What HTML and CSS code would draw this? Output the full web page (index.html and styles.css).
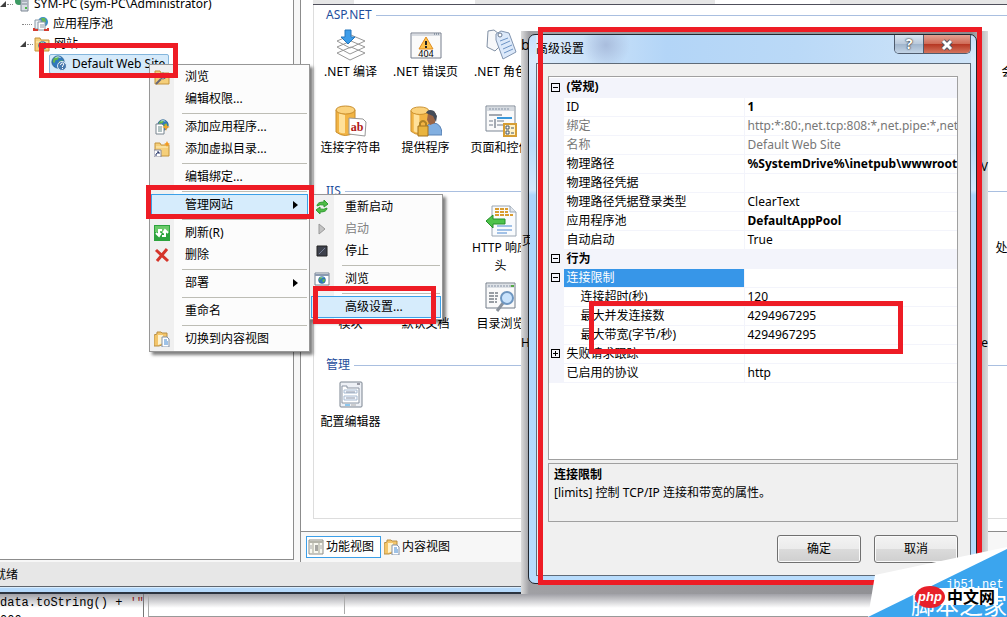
FILE: index.html
```
<!DOCTYPE html>
<html lang="zh-CN">
  <head>
    <meta charset="UTF-8" />
    <title>高级设置</title>
    <link rel="stylesheet" href="styles.css">
  </head>
  <body>
    <svg class="defs" width="0" height="0">
      <symbol id="globe" viewBox="0 0 16 16">
        <circle cx="8" cy="8" r="7" fill="#2f78bd" stroke="#286090" />
        <path d="M3 4q3-3 6-2l-1 3-3 1-1 3-2-1zM9 7l4-1 1 3-3 4-2-2z" fill="#62b84a" />
        <path d="M5 3q3-2 6 0" stroke="#cde9fa" fill="none" />
      </symbol>
      <symbol id="folder" viewBox="0 0 16 16">
        <path d="M1 2h5l1 2h8v11H1z" fill="#f5cf7a" stroke="#c4943c" />
        <path d="M2 6h12" stroke="#fff0bd" />
      </symbol>
      <symbol id="content" viewBox="0 0 16 16">
        <path d="M0 4l3-1V1h4l1 1h5v10l-8 3H0z" fill="#f3c56a" stroke="#b88f45" />
        <path d="M4 4h5v8l-5 2z" fill="#fff3cf" />
        <path d="M8 6h5l2 2v8H8z" fill="#fff" stroke="#8292a8" />
        <path d="M10 9h3M10 11h4M10 13h4" stroke="#3f86cf" />
      </symbol>
      <symbol id="db" viewBox="0 0 32 32">
        <path d="M1 5v22q9 7 19 0V5z" fill="#f2b444" stroke="#c98e2d" />
        <path d="M4 8v19q3 2 6 1V10z" fill="#ffe19a" />
        <ellipse cx="10.500" cy="5" rx="9.500" ry="4" fill="#fbd27c" stroke="#c98e2d" />
      </symbol>
    </svg>

    <main class="window">
      <div class="panes">
        <nav class="tree">
          <ul>
            <li class="level-0">
              <i class="arrow"></i><i class="dots"></i>
              <svg class="icon" viewBox="0 0 16 16">
                <circle cx="5" cy="5" r="4" fill="#3d9a63" />
                <path d="M7 2h7v13H7z" fill="#d7dde4" stroke="#7c8794" />
                <path d="M8 5h5M8 8h5" stroke="#7c8794" /><path d="M11 11h2v2h-2z" fill="#4ab748" />
              </svg>
              <a href="#">SYM-PC (sym-PC\Administrator)</a>
            </li>
            <li class="level-1 leaf">
              <i class="dots"></i>
              <svg class="icon" viewBox="0 0 16 16">
                <circle cx="10" cy="6" r="5" fill="#3e8fc5" /><path d="M8 2l4 0 1 4-3 1z" fill="#65b654" />
                <path d="M2 4h6v9H2z" fill="#eef2f5" stroke="#8796a4" />
                <path d="M5 6h7v8H5z" fill="#fff" stroke="#8796a4" /><path d="M7 9h4M7 11h4" stroke="#8796a4" />
                <path d="M1 12v2h4M15 12v2h-4" stroke="#d33c30" stroke-width="2" fill="none" />
              </svg>
              <a href="#">应用程序池</a>
            </li>
            <li class="level-1">
              <i class="arrow"></i><i class="dots"></i>
              <svg class="icon" viewBox="0 0 16 16"><use href="#folder" /><use href="#globe" x="4" y="5" width="9" height="9" /></svg>
              <a href="#">网站</a>
            </li>
            <li class="level-2">
              <a href="#" class="selected">
                <svg class="icon" viewBox="0 0 16 16">
                  <use href="#globe" width="14" height="14" />
                  <circle cx="11" cy="11" r="4.500" fill="#4778ad" stroke="#dceaf7" />
                  <path d="M9.500 10q0-2 2-2t1 2l-1 1v1M11.500 13v1" stroke="#fff" fill="none" />
                </svg>
                <span>Default Web Site</span>
              </a>
            </li>
          </ul>
        </nav>

        <section class="content">
          <div class="features">
            <section class="group">
              <h2>ASP.NET</h2>
              <div class="items">
                <div class="item">
                  <svg viewBox="0 0 32 32">
                    <path d="M2 24l14-6 14 6-15 7zM2 18l14-6 14 6-15 7zM2 12l14-6 14 6-15 7z" fill="#fff" stroke="#989898" />
                    <path d="M10 1h6v7h4l-7 7-7-7h4z" fill="#3e9de9" stroke="#2477bd" />
                  </svg>
                  <span>.NET 编译</span>
                </div>
                <div class="item">
                  <svg viewBox="0 0 32 32">
                    <path d="M1 4h30v25H1z" fill="#fafafa" stroke="#777f8d" /><path d="M2 6h28" stroke="#b5bdc9" />
                    <path d="M24 5h5" stroke="#4f6278" stroke-dasharray="1 1" />
                    <path d="M16 8l7 12H9z" fill="#ffc34c" stroke="#df8c20" /><path d="M16 12v4M16 17v2" stroke="#222" stroke-width="2" />
                    <text x="16" y="28" class="code">404</text>
                  </svg>
                  <span>.NET 错误页</span>
                </div>
                <div class="item">
                  <svg viewBox="0 0 32 32">
                    <path d="M3 2l6-1 5 4v13l-4 4-8-4z" fill="#f7f8fa" stroke="#8291a5" />
                    <path d="M11 5l5-3 8 2 7 19-13 7-7-19z" fill="#dce9fa" stroke="#8194af" />
                    <path d="M15 12l8-3M16 16l9-4M18 20l9-4M19 24l9-4" stroke="#6c93c4" />
                    <circle cx="15" cy="6" r="2" fill="#fff" stroke="#687991" />
                  </svg>
                  <span>.NET 角色</span>
                </div>
                <div class="item last-column"><span class="no-icon">会话状态</span></div>
                <div class="item">
                  <svg viewBox="0 0 32 32">
                    <use href="#db" width="32" height="32" />
                    <path d="M14 13l14 1 3 3-1 14-16-2z" fill="#fff" stroke="#999" />
                    <text x="22" y="26" class="ab">ab</text>
                  </svg>
                  <span>连接字符串</span>
                </div>
                <div class="item">
                  <svg viewBox="0 0 32 32">
                    <use href="#db" width="30" height="32" />
                    <path d="M15 30q-1-11 8-12 9 0 9 12z" fill="#82afe0" stroke="#5a83b5" />
                    <path d="M18 8q5-5 8 1l-1 9-5 2-3-5z" fill="#9b6544" /><path d="M16 8q2-5 8-2l3 5-1 6-3-6z" fill="#444c59" />
                    <path d="M8 21h10v10H8z" fill="#e9b43e" stroke="#a3731e" /><path d="M10 21v-3q3-4 6 0v3" fill="none" stroke="#ad8126" stroke-width="2" />
                  </svg>
                  <span>提供程序</span>
                </div>
                <div class="item">
                  <svg viewBox="0 0 32 32">
                    <path d="M1 1h29v25H1z" fill="#fafafa" stroke="#7c8795" /><path d="M2 4h27" stroke="#d5dae0" stroke-width="4" />
                    <path d="M4 4h20" stroke="#8793a5" stroke-dasharray="2 1" /><path d="M4 10h13M10 14v9" stroke="#4c5767" />
                    <path d="M12 13h15" stroke="#3998db" stroke-width="2" /><path d="M4 16h4M4 20h4M12 16h7M12 20h6" stroke="#707b89" />
                    <path d="M19 19h12v12H19z" fill="#fff2c6" stroke="#d69d33" stroke-width="2" />
                    <path d="M21 21h3v3h-3zM21 26h3v3h-3z" fill="#fff" stroke="#456" /><path d="M26 23h3M26 28h3" stroke="#456" />
                  </svg>
                  <span>页面和控件</span>
                </div>
              </div>
            </section>

            <section class="group">
              <h2>IIS</h2>
              <div class="items">
                <div class="item third-column">
                  <svg viewBox="0 0 32 32">
                    <path d="M7 1h18l6 6v24H7z" fill="#f9fbfd" stroke="#9aa6b3" /><path d="M25 1v6h6" fill="#e0e5ec" stroke="#9aa6b3" />
                    <path d="M10 4h13M10 7h13M10 10h18" stroke="#d99c30" stroke-width="2" stroke-dasharray="4 1" />
                    <path d="M12 21h15M12 25h15M12 28h10" stroke="#4a88d1" />
                    <path d="M1 16l7-6v4h12v5H8v4z" fill="#4ec34a" stroke="#258e2a" />
                  </svg>
                  <span>HTTP 响应<br>头</span>
                </div>
                <div class="item last-column"><span class="no-icon">处理程序映射</span></div>
                <div class="item"><span class="no-icon">模块</span></div>
                <div class="item"><span class="no-icon">默认文档</span></div>
                <div class="item">
                  <svg viewBox="0 0 32 32">
                    <path d="M1 2h29v25H1z" fill="#fafafa" stroke="#737d89" /><path d="M2 5h27" stroke="#dde1e6" stroke-width="4" />
                    <path d="M3 5h23" stroke="#8793a5" stroke-dasharray="2 1" /><path d="M26 5h3" stroke="#55a947" stroke-width="2" />
                    <path d="M4 12h9M4 15h9M4 18h8M4 21h8" stroke="#39424e" stroke-dasharray="5 1" />
                    <path d="M18 22l-6 8" stroke="#8a929c" stroke-width="3" />
                    <circle cx="22" cy="17" r="6" fill="#c9e3fc" stroke="#6e96c0" stroke-width="2" />
                  </svg>
                  <span>目录浏览</span>
                </div>
              </div>
            </section>

            <section class="group">
              <h2>管理</h2>
              <div class="items">
                <div class="item">
                  <svg viewBox="0 0 32 32">
                    <rect x="5" y="3" width="22" height="25" rx="1" fill="#edf0f5" stroke="#7a8490" />
                    <path d="M7 7h5v2h12v15H7z" fill="#fff" stroke="#8b95a3" /><path d="M22 5h3" stroke="#445" />
                    <path d="M9 11h13v3H9zM9 17h13v4H9z" fill="#f8faff" stroke="#a6bad1" />
                    <path d="M11 13h9M11 19h9" stroke="#8a94a5" /><path d="M10 26h5" stroke="#2a9ce4" /><path d="M16 26h5" stroke="#aaa" />
                  </svg>
                  <span>配置编辑器</span>
                </div>
              </div>
            </section>
          </div>
          <div class="view-tabs">
            <button type="button" class="active">
              <svg class="icon" viewBox="0 0 16 16">
                <path d="M1 1h14v14H1z" fill="#f8f8f0" stroke="#8d8d87" /><path d="M1 3h14" stroke="#b5b5aa" stroke-width="2" />
                <path d="M5 4v10M11 4v10" stroke="#a5a596" /><path d="M2 7h2M2 9h2M12 7h2M12 9h2" stroke="#aaa" />
                <path d="M7 7h3M7 9h3M7 11h3" stroke="#555" />
              </svg>
              功能视图
            </button>
            <button type="button"><svg class="icon"><use href="#content" /></svg>内容视图</button>
          </div>
        </section>
      </div>
      <footer class="status"><span>就绪</span></footer>
      <div class="frame"></div>
    </main>

    <div class="editor">
      <pre class="code-lines">data.toString() + <b>'"</b><b>结</b>
000</pre>
      <div class="editor-panel"><div class="editor-cell"></div></div>
    </div>

    <div class="menu site-menu">
      <button type="button">
        <svg class="icon"><use href="#folder" /><circle cx="9" cy="7" r="3" fill="#d9effb" stroke="#667" /><path d="M7 10l-5 5" stroke="#667" stroke-width="2" /></svg>
        浏览
      </button>
      <button type="button">编辑权限...</button>
      <hr>
      <button type="button">
        <svg class="icon"><use href="#globe" x="3" width="12" height="12" /><path d="M2 5h6l2 2v8H2z" fill="#fff" stroke="#78858f" /><path d="M4 8h4M4 10h4M4 12h4" stroke="#688" /><path d="M12 4l1 3 3 1-3 1-1 3-1-3-3-1 3-1z" fill="#f7a52a" /></svg>
        添加应用程序...
      </button>
      <button type="button">
        <svg class="icon"><use href="#folder" /><path d="M13 0l1 2 2 1-2 1-1 2-1-2-2-1 2-1z" fill="#f39a1f" /><path d="M0 9h7v7H0z" fill="#fff" stroke="#889" /><path d="M2 15v-2l3-2M3 11h2v2" stroke="#236" fill="none" /></svg>
        添加虚拟目录...
      </button>
      <hr>
      <button type="button">编辑绑定...</button>
      <hr>
      <button type="button" class="hot">管理网站<i class="more"></i></button>
      <hr>
      <button type="button">
        <svg class="icon"><path d="M0 0h16v16H0z" fill="#2da33d" /><path d="M1 1h14v6H1z" fill="#69c967" /><path d="M8 5H5v5M2 8l3 3 2-3M8 11h3V6M9 8l2-3 3 3" stroke="#fff" stroke-width="2" fill="none" /></svg>
        刷新(R)
      </button>
      <button type="button">
        <svg class="icon"><path d="M2 3l12 11M13 2L3 14" stroke="#d5352b" stroke-width="3" /></svg>
        删除
      </button>
      <hr>
      <button type="button">部署<i class="more"></i></button>
      <hr>
      <button type="button">重命名</button>
      <hr>
      <button type="button"><svg class="icon"><use href="#content" /></svg>切换到内容视图</button>
    </div>

    <div class="menu manage-menu">
      <button type="button">
        <svg class="icon"><path d="M3 7q0-4 7-4V1l4 4-4 3V6Q6 5 3 7zM13 9q0 4-7 4v2l-4-4 4-3v2q4 1 7-1z" fill="#4fbd46" stroke="#2f9b32" /></svg>
        重新启动
      </button>
      <button type="button" disabled>
        <svg class="icon"><path d="M5 3l6 5-6 5z" fill="#c3c3c3" stroke="#999" /></svg>
        启动
      </button>
      <button type="button">
        <svg class="icon"><path d="M3 3h10v10H3z" fill="#3e414c" stroke="#222" /><path d="M5 11l6-6" stroke="#777f96" /></svg>
        停止
      </button>
      <hr>
      <button type="button">
        <svg class="icon"><path d="M1 2h14v12H1z" fill="#fff" stroke="#778494" /><path d="M1 4h14" stroke="#8c9ab0" stroke-width="2" /><use href="#globe" x="4" y="5" width="8" height="8" /></svg>
        浏览
      </button>
      <hr>
      <button type="button" class="hot">高级设置...</button>
    </div>

    <div class="dialog-shade">
      <span class="peek peek-b">b</span>
      <span class="peek peek-page">页</span>
      <span class="peek peek-h">H</span>
      <span class="peek peek-v">V</span>
      <span class="peek peek-e">e</span>
      <div class="dialog" role="dialog" aria-labelledby="dialog-title">
        <header>
          <h1 id="dialog-title">高级设置</h1>
          <div class="caption-buttons">
            <button type="button" class="help" aria-label="帮助">?</button>
            <button type="button" class="close" aria-label="关闭">
              <svg viewBox="0 0 12 12"><path d="M2 2l8 8M10 2l-8 8" stroke="#555a68" stroke-width="5" /><path d="M2 2l8 8M10 2l-8 8" stroke="#fff" stroke-width="3" /></svg>
            </button>
          </div>
        </header>
        <div class="client">
          <div class="property-grid">
            <table>
              <colgroup><col class="col-toggle"><col class="col-name"><col></colgroup>
              <tbody>
                <tr class="category"><td><button type="button" class="toggle" aria-label="折叠"></button></td><th colspan="2">(常规)</th></tr>
                <tr><td></td><td>ID</td><td class="bold">1</td></tr>
                <tr class="readonly"><td></td><td>绑定</td><td>http:*:80:,net.tcp:808:*,net.pipe:*,net.msmq</td></tr>
                <tr class="readonly"><td></td><td>名称</td><td>Default Web Site</td></tr>
                <tr><td></td><td>物理路径</td><td class="bold">%SystemDrive%\inetpub\wwwroot</td></tr>
                <tr><td></td><td>物理路径凭据</td><td></td></tr>
                <tr><td></td><td>物理路径凭据登录类型</td><td>ClearText</td></tr>
                <tr><td></td><td>应用程序池</td><td class="bold">DefaultAppPool</td></tr>
                <tr><td></td><td>自动启动</td><td>True</td></tr>
                <tr class="category"><td><button type="button" class="toggle" aria-label="折叠"></button></td><th colspan="2">行为</th></tr>
                <tr class="current"><td><button type="button" class="toggle" aria-label="折叠"></button></td><td>连接限制</td><td></td></tr>
                <tr class="child"><td></td><td>连接超时(秒)</td><td>120</td></tr>
                <tr class="child"><td></td><td>最大并发连接数</td><td>4294967295</td></tr>
                <tr class="child"><td></td><td>最大带宽(字节/秒)</td><td>4294967295</td></tr>
                <tr><td><button type="button" class="toggle plus" aria-label="展开"></button></td><td>失败请求跟踪</td><td></td></tr>
                <tr><td></td><td>已启用的协议</td><td>http</td></tr>
              </tbody>
            </table>
          </div>
          <div class="description">
            <strong>连接限制</strong>
            <p>[limits] 控制 TCP/IP 连接和带宽的属性。</p>
          </div>
          <div class="actions">
            <button type="button">确定</button>
            <button type="button">取消</button>
          </div>
        </div>
      </div>
    </div>

    <div class="mark mark-site"></div>
    <div class="mark mark-manage"></div>
    <div class="mark mark-advanced"></div>
    <div class="mark mark-dialog"></div>
    <div class="mark mark-limits"></div>

    <svg class="watermark" viewBox="0 0 139 70">
      <path d="M0 70L7 28 139 0v70z" fill="#fff" />
      <path d="M0 70L139 2v68z" fill="#3ba5ee" />
      <text x="78" y="41" class="wm-url">jb51.net</text>
      <text x="43" y="67" class="wm-name">脚本之家</text>
      <path d="M50 41h80v17H50z" fill="#fff" />
      <ellipse cx="62" cy="50" rx="15" ry="11" fill="#e8202a" />
      <text x="62" y="54" class="wm-php">php</text>
      <text x="79" y="56" class="wm-cn">中文网</text>
    </svg>
  </body>
</html>
```
FILE: styles.css
```
:root {
  --line: #8c8c8c;
  --surface: #f0f0f0;
  --heading: #1e4e9c;
  --aero: #b5d9fb;
  --mark: #ee1c25;
}

* {
  box-sizing: border-box;
}

body {
  display: flex;
  flex-direction: column;
  position: relative;
  height: 100vh;
  margin: 0;
  overflow: hidden;
  background: #fff;
  color: #000;
  font-family: "Noto Sans", "Noto Sans CJK SC", sans-serif;
  font-size: 12px;
  line-height: 18px;
}

button {
  padding: 0;
  border: 0;
  background: none;
  color: inherit;
  font: inherit;
}

a {
  color: inherit;
  text-decoration: none;
}

.defs {
  position: absolute;
}

.icon {
  flex: none;
  width: 16px;
  height: 16px;
}

/* main window */
.window {
  display: flex;
  flex: 1;
  flex-direction: column;
  min-height: 0;
  background: #f7f7f7;
}

.panes {
  display: flex;
  flex: 1;
  gap: 6px;
  min-height: 0;
}

.tree {
  flex: 0 0 294px;
  margin-bottom: 2px;
  overflow: hidden;
  border-right: 1px solid var(--line);
  border-bottom: 1px solid var(--line);
  background: #fff;
}

.tree ul {
  margin: -6px 0 0;
  padding: 0;
  list-style: none;
}

.tree li {
  display: flex;
  align-items: center;
  height: 20px;
  white-space: nowrap;
}

.tree a {
  margin-left: 4px;
}

.level-1 {
  padding-left: 20px;
}

.level-2 {
  padding-left: 45px;
}

.arrow {
  width: 0;
  border-bottom: 6px solid #404040;
  border-left: 6px solid transparent;
}

.dots {
  width: 6px;
  margin: 0 1px;
  border-top: 1px dotted #888;
}

.leaf .dots {
  width: 10px;
  margin-left: 2px;
}

.tree .selected {
  display: flex;
  gap: 5px;
  height: 20px;
  padding: 0 3px 0 1px;
  border: 1px solid #84b6dc;
  border-radius: 2px;
  background: #d5eafa;
}

.content {
  display: flex;
  flex: 1;
  flex-direction: column;
  min-width: 0;
  border-left: 1px solid var(--line);
}

.features {
  display: flex;
  flex: 1;
  flex-direction: column;
  overflow: hidden;
  padding: 0 0 12px 12px;
  border-bottom: 1px solid var(--line);
  background: #fff;
}

.features::before {
  height: 4px;
  border-bottom: 1px solid #50505c;
  background: linear-gradient(to right, #e6e6e6 41px, #fff 41px, #fff 162px, #e6e6e6 162px, #e6e6e6 402px, #fff 402px, #fff 517px, #e6e6e6 517px);
  content: "";
}

.group {
  padding: 2px 0 6px;
  border-left: 1px solid #ddd;
}

.group:last-child {
  flex: 1;
  padding: 0;
  border-bottom: 1px solid #ddd;
}

.group h2 {
  display: flex;
  align-items: center;
  gap: 4px;
  height: 16px;
  margin: 0;
  padding-left: 12px;
  color: var(--heading);
  font-size: 12px;
  font-weight: normal;
}

.group h2::after {
  flex: 1;
  border-top: 1px solid #a9bfe0;
  content: "";
}

.items {
  display: grid;
  grid-template-columns: repeat(10, 75px);
  grid-auto-rows: minmax(76px, auto);
  margin-left: -1px;
}

.item {
  display: flex;
  flex-direction: column;
  align-items: center;
  gap: 2px;
  padding-top: 6px;
  text-align: center;
}

.item svg {
  width: 32px;
  height: 32px;
}

.item span {
  width: 70px;
  white-space: nowrap;
}

.last-column span {
  white-space: normal;
}

.no-icon {
  padding-top: 34px;
}

.third-column {
  grid-column: 3;
}

.last-column {
  grid-column: 10;
}

.code {
  font-size: 9px;
  text-anchor: middle;
}

.ab {
  fill: #b01818;
  font: bold 12px "Liberation Serif", serif;
  text-anchor: middle;
}

.view-tabs {
  display: flex;
  gap: 1px;
  height: 30px;
  padding: 4px 5px;
}

.view-tabs button {
  display: flex;
  align-items: center;
  gap: 2px;
  padding: 0 6px 0 1px;
  border: 1px solid transparent;
}

.view-tabs .active {
  border-color: #3c9fe8;
  background: #fff;
}

.status {
  height: 25px;
  padding: 4px 0 2px;
  border-bottom: 1px solid #60666e;
  background: #e7e7e7;
}

.status span {
  margin-left: -6px;
}

.frame {
  height: 7px;
  border-top: 1px solid #d8ecfd;
  border-bottom: 2px solid #2c3440;
  background: var(--aero);
}

/* code editor behind the window */
.editor {
  display: flex;
  gap: 4px;
  height: 23px;
  overflow: hidden;
  background: linear-gradient(#a0a0a6, #fff 14px);
}

.code-lines {
  flex: 0 0 144px;
  margin: 0;
  overflow: hidden;
  border-right: 1px solid #777;
  font-family: "Liberation Mono", "Noto Sans CJK SC", monospace;
  font-size: 12px;
  line-height: 18px;
}

.code-lines b {
  color: #8c1c1c;
  font-weight: normal;
}

.editor-panel {
  flex: 1;
  border-bottom: 1px solid #999;
  border-left: 1px solid #aaa;
}

.editor-cell {
  width: 196px;
  height: 20px;
  border-right: 1px solid #aaa;
}

/* context menus */
.menu {
  position: absolute;
  padding: 1px;
  border: 1px solid #979797;
  background: linear-gradient(to right, #f0f0f0 24px, #fcfcfc 24px);
  box-shadow: 3px 3px 3px rgba(0, 0, 0, 0.5);
}

.menu button {
  display: flex;
  align-items: center;
  gap: 15px;
  position: relative;
  width: 100%;
  height: 22px;
  padding-left: 34px;
  white-space: nowrap;
}

.menu button:has(.icon) {
  padding-left: 3px;
}

.menu button:disabled {
  color: #808080;
}

.menu hr {
  height: 1px;
  margin: 3px 1px 2px 31px;
  border: 0;
  background: #bdbdb5;
}

.menu .hot {
  background: #d6ecfc;
  box-shadow: inset 0 0 0 1px #3ca0e8;
}

.more {
  margin-left: auto;
  margin-right: 10px;
  border: 4px solid transparent;
  border-right: 0;
  border-left: 5px solid #000;
}

.site-menu {
  top: 64px;
  left: 149px;
  width: 161px;
}

.manage-menu {
  top: 194px;
  left: 309px;
  width: 134px;
}

/* dialog */
.dialog-shade {
  display: flex;
  position: absolute;
  top: 31px;
  left: 521px;
  width: 467px;
  height: 563px;
  padding: 3px 11px 10px 7px;
  background: linear-gradient(to right, #dcdcdc, #a0a0a4 8px, #8c8c90 450px, #dcdcdc);
}

.peek {
  position: absolute;
}

.peek-b {
  top: 5px;
  left: 0;
  font-size: 14px;
}

.peek-page {
  top: 201px;
  left: 1px;
  z-index: 1;
  width: 8px;
  overflow: hidden;
}

.peek-h {
  top: 303px;
  left: 0;
}

.peek-v {
  top: 127px;
  right: 0;
}

.peek-e {
  top: 303px;
  right: 0;
}

.dialog {
  display: flex;
  flex: 1;
  flex-direction: column;
  position: relative;
  min-width: 0;
  padding: 0 5px 7px 7px;
  border: 1px solid #20262e;
  border-radius: 7px;
  background: linear-gradient(#c5dffa, #d9ebfc 25px, #bcdcfa 110px, #d3e9fd 155px, #acd5fb 160px, #b8dcfc);
}

.dialog header {
  display: flex;
  justify-content: space-between;
  height: 28px;
  background: radial-gradient(circle at 70px 10px, #a9bddd, transparent 24px), linear-gradient(to right, #dcebfa, #b3d5f7 30%, #bad9f7 60%, #cfe4f8);
}

.dialog h1 {
  margin: 5px 0 0;
  font-size: 12px;
  font-weight: normal;
}

.caption-buttons {
  display: flex;
  height: 19px;
  overflow: hidden;
  border: 1px solid #4f5c6e;
  border-top: 0;
  border-radius: 0 0 5px 5px;
}

.help {
  width: 28px;
  background: linear-gradient(#dae6f2, #b9c9db 50%, #9fb4cb 50%, #c3d4e6);
  color: #fff;
  font-size: 14px;
  font-weight: bold;
  text-shadow: 0 0 2px #222, 0 0 1px #222;
}

.close {
  width: 47px;
  border-left: 1px solid #4f5c6e;
  background: linear-gradient(#e4a193, #cf6a55 50%, #b53521 50%, #d4745d);
}

.close svg {
  width: 12px;
  height: 12px;
  vertical-align: middle;
}

.client {
  display: flex;
  flex: 1;
  flex-direction: column;
  min-height: 0;
  padding: 12px 12px 12px 11px;
  border: 1px solid #5f6b78;
  background: var(--surface);
}

.property-grid {
  flex: 1;
  min-height: 0;
  overflow: hidden;
  padding-top: 1px;
  border: 1px solid #a0a0a0;
  background: #fff;
}

.property-grid table {
  width: 100%;
  border-collapse: collapse;
  table-layout: fixed;
}

.col-toggle {
  width: 14px;
}

.col-name {
  width: 181px;
}

.property-grid td,
.property-grid th {
  height: 19px;
  padding: 0 0 0 3px;
  overflow: hidden;
  border-right: 1px solid #f3f4fb;
  border-bottom: 1px solid #f3f4fb;
  text-align: left;
  white-space: nowrap;
}

.property-grid td:last-child,
.property-grid th {
  border-right: 0;
}

.property-grid td:first-child,
.property-grid .category th {
  background: #f3f4fb;
}

.property-grid td:first-child {
  padding-left: 2px;
}

.property-grid .readonly {
  color: #777;
}

.property-grid .bold {
  font-weight: bold;
}

.property-grid .current td:nth-child(2) {
  background: #3796e8;
  color: #fff;
}

.property-grid .child td:nth-child(2) {
  padding-left: 17px;
}

.toggle {
  display: block;
  width: 9px;
  height: 9px;
  border: 1px solid #000;
  background: linear-gradient(#000, #000) center / 5px 1px no-repeat;
}

.toggle.plus {
  background: linear-gradient(#000, #000) center / 5px 1px no-repeat, linear-gradient(#000, #000) center / 1px 5px no-repeat;
}

.description {
  height: 59px;
  margin-top: 3px;
  padding: 2px 5px;
  border: 1px solid #a0a0a0;
}

.description p {
  margin: 0;
}

.actions {
  display: flex;
  justify-content: flex-end;
  gap: 13px;
  padding-top: 13px;
}

.actions button {
  width: 84px;
  height: 28px;
  border: 1px solid #707070;
  border-radius: 3px;
  background: linear-gradient(#f3f3f3, #ebebeb 50%, #dbdbdb 50%, #cfcfcf);
  box-shadow: inset 0 0 0 1px #fafafa;
}

/* red highlight boxes */
.mark {
  position: absolute;
  border: 5px solid var(--mark);
}

.mark-site {
  top: 43px;
  left: 39px;
  width: 139px;
  height: 35px;
}

.mark-manage {
  top: 185px;
  left: 146px;
  width: 168px;
  height: 34px;
}

.mark-advanced {
  top: 286px;
  left: 313px;
  width: 123px;
  height: 38px;
}

.mark-dialog {
  top: 27px;
  left: 538px;
  width: 444px;
  height: 558px;
}

.mark-limits {
  top: 301px;
  left: 589px;
  width: 314px;
  height: 53px;
}

/* watermark */
.watermark {
  position: absolute;
  right: 0;
  bottom: 0;
  width: 139px;
  height: 70px;
}

.wm-url {
  fill: #fff;
  font: 12px "Liberation Mono", monospace;
}

.wm-name {
  fill: #fff;
  font: 24px "Noto Sans CJK SC", sans-serif;
}

.wm-php {
  fill: #fff;
  font: italic bold 13px "Liberation Sans", sans-serif;
  text-anchor: middle;
}

.wm-cn {
  font: bold 16px "Noto Sans CJK SC", sans-serif;
}
```
